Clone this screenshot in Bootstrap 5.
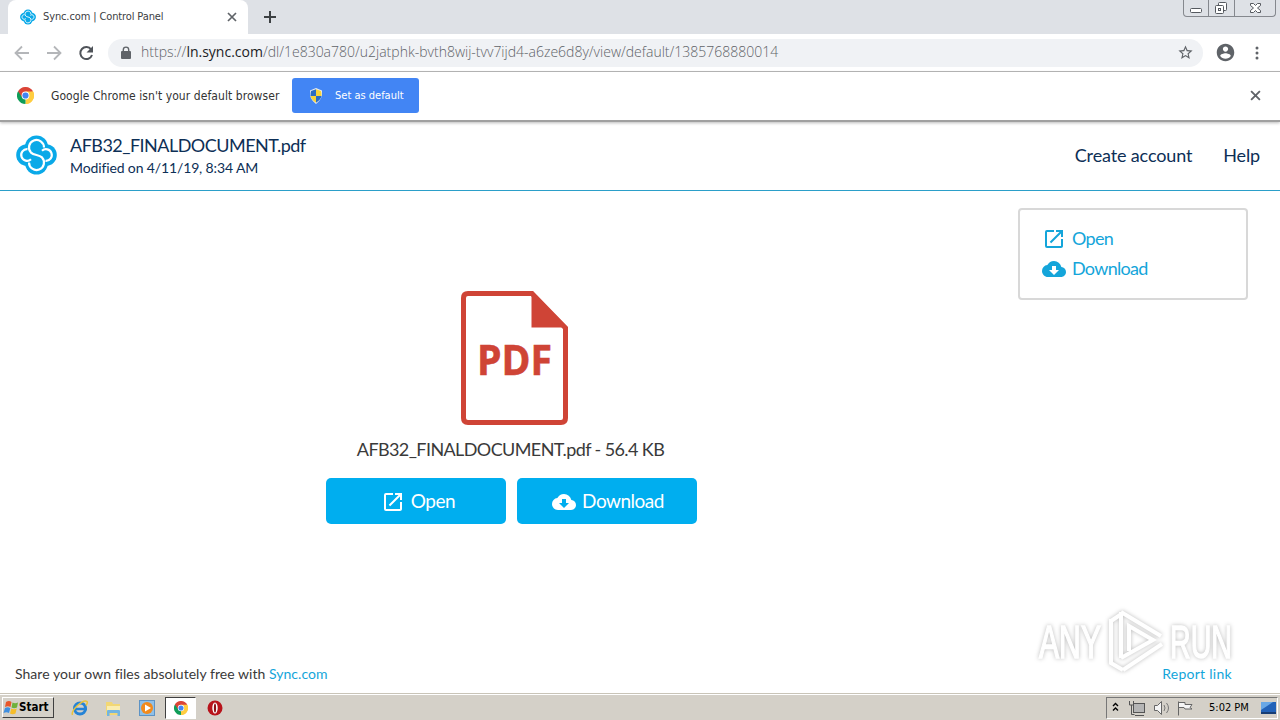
<!DOCTYPE html>
<html lang="en">
<head>
    <meta charset="UTF-8">
    <meta name="viewport" content="width=device-width, initial-scale=1.0">
    <title>Sync.com | Control Panel</title>
    <!-- Bootstrap CSS -->
    <link href="https://cdn.jsdelivr.net/npm/bootstrap@5.3.3/dist/css/bootstrap.min.css" rel="stylesheet">
    <style>
        body { height: 720px; overflow: hidden; font-family: Lato, "Liberation Sans", sans-serif; line-height: 1.2; color: #3a3a3a; }
        a { text-decoration: none; }
        svg { display: block; flex: none; }
        .chrome-ui { font-family: "DejaVu Sans Condensed", "DejaVu Sans", sans-serif; font-stretch: condensed; }

        /* browser window */
        .tab-strip { height: 34px; background: #dee1e6; }
        .browser-tab { width: 240px; height: 34px; margin-left: 8px; padding-left: 12px; border-radius: 8px 8px 0 0; font-size: 11px; color: #3c4043; }
        .tab-title { width: 184px; margin-left: 7px; letter-spacing: -.12px; }
        .window-buttons { width: 93px; height: 17px; margin-right: 4px; border: 1px solid #85888e; border-top: 0; border-radius: 0 0 4px 4px; }
        .window-buttons div + div { border-left: 1px solid #85888e; }
        .toolbar { height: 38px; border-bottom: 1px solid #b0b0b0; }
        .address { width: 1095px; height: 28px; border-radius: 14px; margin-left: 12px; padding: 0 9px 0 10px; background: #f0f2f5; font-family: "Open Sans", sans-serif; font-weight: 300; font-size: 14px; color: #5f6368; }
        .address b { font-weight: 400; color: #202124; }
        .address-text { margin-left: 7px; }
        .profile { margin-left: 12px; }
        .menu-dots { margin-left: 18px; }
        .infobar { height: 50px; border-bottom: 2px solid #a0a0a0; padding: 0 19px 1px 17px; font-size: 12px; color: #333; box-shadow: 0 1px 3px #bbb; }
        .infobar-text { width: 241px; margin-left: 17px; padding-top: 1px; letter-spacing: .07px; }
        .btn-default-browser { width: 127px; height: 35px; background: #4285f4; border-radius: 3px; font-size: 11px; }
        .default-text { margin-left: 11px; padding-top: 1px; }

        /* shared file page */
        .file-header { height: 69px; border-bottom: 1px solid #2b9fc9; padding: 0 20px 2px 16px; color: #0d2f56; }
        .file-info { margin: 1px 0 0 13px; }
        .file-name { font-size: 18px; line-height: 24px; letter-spacing: -.53px; }
        .file-date { font-size: 14px; line-height: 20px; padding-top: 1px; letter-spacing: -.13px; }
        .header-links { gap: 31px; font-size: 18px; letter-spacing: -.14px; padding-top: 2px; }
        .header-links a { color: #0d2f56; }
        .file-page { height: 502px; }
        .preview { width: 1018px; padding: 100px 0 0 5px; }
        .pdf-icon { margin-left: 6px; }
        .preview-name { font-size: 18px; margin: 14px 2px 0 0; letter-spacing: -.6px; }
        .preview-buttons { gap: 11px; margin-top: 17px; }
        .btn-sync { width: 180px; height: 46px; background: #00aeef; border-radius: 5px; font-size: 19px; letter-spacing: -.5px; gap: 6px; padding: 2px 0 0 2px; }
        .btn-sync-open { padding-left: 4px; }
        .action-box { width: 230px; height: 92px; margin-top: 17px; border: 2px solid #d8d8d8; border-radius: 4px; font-size: 18px; letter-spacing: -.7px; padding: 14px 0 0 22px; }
        .action-box a { height: 30px; gap: 6px; }
        .sync-link { color: #14a5da; }
        .page-footer { font-size: 14px; letter-spacing: .04px; padding: 0 48px 10px 15px; }
        .report-link { letter-spacing: .28px; }
        .watermark { left: 1032px; top: 604px; }

        /* taskbar */
        .taskbar { height: 27px; background: #d4d0c8; border-top: 1px solid #c9c4b8; box-shadow: inset 0 1px #fff; padding-top: 1px; }
        .start-button { width: 52px; height: 21px; margin-left: 2px; border: 1px solid; border-color: #fff #404040 #404040 #fff; font-size: 11.5px; color: #000; }
        .quick-icons { margin: 0 2px 0 17px; }
        .running-app { width: 31px; height: 22px; border: 1px solid; border-color: #404040 #fff #fff #404040; background: #fff; }
        .opera { margin-left: 11px; }
        .tray { width: 172px; height: 22px; margin-right: 2px; border: 1px solid; border-color: #777 #fff #fff #777; font-size: 11px; color: #000; padding-left: 5px; }
        .tray-time { margin-left: 11px; }
    </style>
</head>
<body class="d-flex flex-column bg-white">

    <!-- Shared icons -->
    <svg width="0" height="0" class="position-absolute">
        <symbol id="sync-logo" viewBox="0.5 0 41 40">
            <g fill="#0aa9e8">
                <circle cx="21" cy="12" r="11.500"/><circle cx="11.500" cy="20" r="10.800"/>
                <circle cx="30.500" cy="20" r="10.800"/><circle cx="21" cy="28" r="11.500"/>
            </g>
            <g fill="none" stroke="#fff" stroke-width="2.200">
                <path d="M28.500 12.500A7.500 7.500 0 1 0 15.500 17.600C18.500 20.500 23.500 19.500 26.500 22.400A7.500 7.500 0 1 1 13.500 27.500"/>
                <path d="M12 14.200A5.800 5.800 0 1 0 15.500 24.200M30 25.800A5.800 5.800 0 1 0 26.500 15.800"/>
            </g>
        </symbol>
        <symbol id="chrome-logo" viewBox="0 0 48 48">
            <path fill="#db4437" d="M24 24 3.200 12A24 24 0 0 1 44.800 12z"/>
            <path fill="#ffcd40" d="M24 24 44.800 12A24 24 0 0 1 24 48z"/>
            <path fill="#0f9d58" d="M24 24V48A24 24 0 0 1 3.200 12z"/>
            <path fill="#db4437" d="M24 13H45.400L40 7H10L3.200 12 14.500 29.500z"/>
            <path fill="#ffcd40" d="M24 13H45.400A24 24 0 0 1 24 48L33.500 29.500z"/>
            <circle cx="24" cy="24" r="11" fill="#fff"/><circle cx="24" cy="24" r="8.700" fill="#4285f4"/>
        </symbol>
        <symbol id="open-icon" viewBox="0 0 24 24">
            <path fill="currentColor" d="M19 19H5V5h7V3H5a2 2 0 0 0-2 2v14a2 2 0 0 0 2 2h14c1.100 0 2-.9 2-2v-7h-2v7zM14 3v2h3.590l-9.830 9.830 1.410 1.410L19 6.410V10h2V3h-7z"/>
        </symbol>
        <symbol id="download-icon" viewBox="0 0 24 24">
            <path fill="currentColor" d="M19.350 10.040A7.490 7.490 0 0 0 12 4C9.110 4 6.600 5.640 5.350 8.040A5.994 5.994 0 0 0 0 14c0 3.310 2.690 6 6 6h13c2.760 0 5-2.240 5-5 0-2.640-2.050-4.780-4.650-4.960zM17 13l-5 5-5-5h3V9h4v4h3z"/>
        </symbol>
        <symbol id="close-icon" viewBox="0 0 10 10">
            <path d="M1 1 9 9M9 1 1 9" stroke="#5f6368" stroke-width="1.700"/>
        </symbol>
    </svg>

    <!-- Tabs -->
    <div class="tab-strip d-flex chrome-ui">
        <div class="browser-tab bg-white d-flex align-items-center">
            <svg width="16" height="16"><use href="#sync-logo"/></svg>
            <span class="tab-title">Sync.com | Control Panel</span>
            <svg width="10" height="10"><use href="#close-icon"/></svg>
        </div>
        <svg width="12" height="12" class="align-self-center ms-3" viewBox="0 0 12 12"><path d="M6 0V12M0 6H12" stroke="#3c4043" stroke-width="2"/></svg>
        <div class="window-buttons d-flex ms-auto">
            <div><svg width="24" height="16"><rect x="6.500" y="8.500" width="11" height="4" rx="1" fill="#fff" stroke="#55595f"/></svg></div>
            <div><svg width="25" height="16" fill="#fff" stroke="#55595f"><rect x="9.500" y="2.500" width="8" height="8" rx="1"/><rect x="6.500" y="5.500" width="8" height="8" rx="1"/><rect x="9.500" y="8.500" width="2" height="2"/></svg></div>
            <div><svg width="41" height="16"><path d="M15.500 3.500h3l2 2 2-2h3v2l-3 2.500 3 2.500v2h-3l-2-2-2 2h-3v-2l3-2.500-3-2.500z" fill="#fff" stroke="#55595f"/></svg></div>
        </div>
    </div>

    <!-- Address bar -->
    <div class="toolbar d-flex align-items-center">
        <svg width="96" height="36" fill="none" stroke-width="1.800">
            <path d="M29 18H16M22 11.500 15.500 18l6.500 6.500M47 18H60M54 11.500l6.500 6.500L54 24.500" stroke="#b4b6b9"/>
            <path d="M91.200 14.600A6 6 0 1 0 92 20" stroke="#50545a" stroke-width="2"/>
            <path d="M93 11v6.500h-6.500z" fill="#50545a"/>
        </svg>
        <div class="address d-flex align-items-center">
            <svg width="16" height="16" viewBox="0 0 16 16"><rect x="3" y="6" width="10" height="8" rx="1" fill="#5f6368"/><path d="M5.300 7V4.800a2.700 2.700 0 0 1 5.400 0V7" fill="none" stroke="#5f6368" stroke-width="1.400"/></svg>
            <span class="address-text">https://<b>ln.sync.com</b>/dl/1e830a780/u2jatphk-bvth8wij-tvv7ijd4-a6ze6d8y/view/default/1385768880014</span>
            <svg width="17" height="17" class="ms-auto" viewBox="0 0 24 24"><path fill="#5f6368" d="M22 9.240l-7.190-.62L12 2 9.190 8.630 2 9.240l5.460 4.730L5.820 21 12 17.270 18.180 21l-1.630-7.030L22 9.240zM12 15.400l-3.760 2.270 1-4.280-3.320-2.880 4.380-.38L12 6.100l1.710 4.040 4.380.38-3.320 2.880 1 4.280L12 15.400z"/></svg>
        </div>
        <svg width="21" height="21" class="profile" viewBox="2 0 24 24"><path fill="#5f6368" d="M14 2C8.480 2 4 6.480 4 12s4.480 10 10 10 10-4.480 10-10S19.520 2 14 2zm0 3c1.660 0 3 1.340 3 3s-1.340 3-3 3-3-1.340-3-3 1.340-3 3-3zm0 14.200c-2.500 0-4.710-1.280-6-3.220.03-1.990 4-3.080 6-3.080 1.990 0 5.970 1.090 6 3.080-1.290 1.940-3.500 3.220-6 3.220z"/></svg>
        <svg width="6" height="16" class="menu-dots" fill="#5f6368"><circle cx="3" cy="3" r="1.500"/><circle cx="3" cy="8" r="1.500"/><circle cx="3" cy="13" r="1.500"/></svg>
    </div>

    <!-- Default browser prompt -->
    <div class="infobar d-flex align-items-center chrome-ui">
        <svg width="17" height="17"><use href="#chrome-logo"/></svg>
        <span class="infobar-text">Google Chrome isn't your default browser</span>
        <button type="button" class="btn btn-default-browser text-white d-flex align-items-center p-0 ps-3 border-0">
            <svg width="16" height="16" viewBox="0 0 16 16"><path d="M8 0 14 2.500Q15 11 8 16 1 11 2 2.500z" fill="#e8edf2"/><path d="M8 1.200V8H2.500Q2.400 5 3 3z" fill="#2b6cc4"/><path d="M8 1.200 13 3Q13.600 5 13.500 8H8z" fill="#f7d33b"/><path d="M2.500 8H8v6.800Q3.500 12 2.500 8z" fill="#f7d33b"/><path d="M8 8h5.500Q12.500 12 8 14.800z" fill="#2b6cc4"/></svg>
            <span class="default-text">Set as default</span>
        </button>
        <svg width="11" height="11" class="ms-auto"><use href="#close-icon"/></svg>
    </div>

    <!-- File header -->
    <header class="file-header d-flex align-items-center">
        <svg width="41" height="40"><use href="#sync-logo"/></svg>
        <div class="file-info">
            <div class="file-name">AFB32_FINALDOCUMENT.pdf</div>
            <div class="file-date">Modified on 4/11/19, 8:34 AM</div>
        </div>
        <nav class="header-links d-flex ms-auto">
            <a href="#">Create account</a>
            <a href="#">Help</a>
        </nav>
    </header>

    <!-- File preview -->
    <main class="file-page d-flex flex-column">
        <div class="d-flex">
            <section class="preview d-flex flex-column align-items-center">
                <svg width="107" height="134" class="pdf-icon" viewBox="0 0 107 134">
                    <path d="M71 2.500H7Q2.500 2.500 2.500 7V127Q2.500 131.500 7 131.500H100Q104.500 131.500 104.500 127V37z" fill="#fff" stroke="#cf4436" stroke-width="5"/>
                    <path d="M70.500 0 107 36.500H70.500z" fill="#cf4436"/>
                    <text x="16" y="83.500" textLength="75" lengthAdjust="spacingAndGlyphs" font-family="Open Sans" font-weight="700" font-size="42" fill="#cf4436" stroke="#cf4436" stroke-width=".6">PDF</text>
                </svg>
                <div class="preview-name">AFB32_FINALDOCUMENT.pdf - 56.4 KB</div>
                <div class="preview-buttons d-flex">
                    <button type="button" class="btn btn-sync btn-sync-open text-white border-0 d-flex align-items-center justify-content-center"><svg width="24" height="24"><use href="#open-icon"/></svg>Open</button>
                    <button type="button" class="btn btn-sync text-white border-0 d-flex align-items-center justify-content-center"><svg width="24" height="24"><use href="#download-icon"/></svg>Download</button>
                </div>
            </section>
            <aside class="action-box">
                <a href="#" class="sync-link d-flex align-items-center"><svg width="24" height="24"><use href="#open-icon"/></svg>Open</a>
                <a href="#" class="sync-link d-flex align-items-center"><svg width="24" height="24"><use href="#download-icon"/></svg>Download</a>
            </aside>
        </div>
        <footer class="page-footer d-flex justify-content-between mt-auto">
            <span>Share your own files absolutely free with <a href="#" class="sync-link">Sync.com</a></span>
            <a href="#" class="sync-link report-link">Report link</a>
        </footer>
    </main>

    <!-- Taskbar -->
    <div class="taskbar d-flex align-items-center chrome-ui">
        <div class="start-button d-flex align-items-center fw-bold">
            <svg width="16" height="16" viewBox="0 0 16 16"><path d="M3 2Q6 0 8.500 2L7.500 7Q5 5.500 2 7z" fill="#e8562a"/><path d="M9.500 2.500Q12 4 15 2.500L14 7.500Q11 9 8.500 7.500z" fill="#6fb13c"/><path d="M2 8Q5 6.500 7.300 8.200L6 13Q3.500 11.500.5 13z" fill="#3f8fe0"/><path d="M8.300 8.600Q11 10 13.700 8.600L12.500 13.500Q9.500 15 7 13.400z" fill="#f5bd2a"/></svg>
            <span>Start</span>
        </div>
        <svg width="92" height="18" class="quick-icons" viewBox="0 0 92 18">
            <circle cx="9" cy="9.500" r="5.500" fill="none" stroke="#2583d6" stroke-width="3"/><path d="M5 10h11" stroke="#2583d6" stroke-width="2.500"/><path d="M1.500 16Q0 13 6 7 13 .5 16 2.500 17 4 15 6.500" fill="none" stroke="#e9c33b" stroke-width="1.500"/>
            <path d="M35 3h6l1 2h7v11H35z" fill="#f2d774"/><path d="M36 7h13v6H36z" fill="#faedb0"/><path d="M36 17v-5q0-1 1-1h11q1 0 1 1v5h-2.500v-3h-8v3z" fill="#72b4e0"/>
            <rect x="68.500" y="1.500" width="15" height="15" fill="#8fc0e8" stroke="#5d93c5"/><circle cx="76" cy="9" r="6" fill="#f28a1c"/><path d="M74 5.500 80 9 74 12.500z" fill="#fff"/>
        </svg>
        <div class="running-app d-flex align-items-center justify-content-center"><svg width="14" height="14"><use href="#chrome-logo"/></svg></div>
        <svg width="16" height="16" class="opera" viewBox="0 0 16 16"><circle cx="8" cy="8" r="7.500" fill="#b8131b"/><ellipse cx="8" cy="8" rx="2.700" ry="5.500" fill="#fff"/><ellipse cx="8" cy="8" rx="1.100" ry="4.500" fill="#8b0e14"/></svg>
        <div class="tray d-flex align-items-center ms-auto">
            <svg width="86" height="18" viewBox="0 0 86 18" fill="none">
                <path d="M1 7 3.500 4.500 6 7M1 11.500 3.500 9 6 11.500" stroke="#000" stroke-width="1.400"/>
                <rect x="21.500" y="4.500" width="11" height="9" fill="#b5b5b5" stroke="#555"/><path d="M23 16.500h9M17.500 2v4h4V2M19.500 6v9.500h3" stroke="#555"/>
                <path d="M42.500 6.500h3l4-4v13l-4-4h-3z" fill="#f5f5f5" stroke="#666"/><path d="M52 6q2 3 0 6M54.500 4q4 5 0 10" stroke="#777"/>
                <path d="M66.500 2.500v14M67 3.500h6v2h7l-2 3 2 1.500h-7l-1-1.500h-5" fill="#f5f5f5" stroke="#666"/>
            </svg>
            <span class="tray-time">5:02 PM</span>
            <svg width="16" height="14" class="ms-auto" viewBox="0 0 16 14"><rect y="1" width="15" height="10" fill="#2262b8"/><path d="M0 1h12L0 9z" fill="#69a8e6"/><path d="M0 12h15" stroke="#173d74" stroke-width="2"/></svg>
        </div>
    </div>

    <!-- Watermark over the page -->
    <svg class="watermark position-absolute overflow-visible" width="210" height="74" viewBox="0 0 210 74">
        <g style="filter: drop-shadow(0 0 2px #bbb)" fill="#fff" stroke="#fff" font-family="Liberation Sans Narrow, Liberation Sans" font-size="46">
            <text x="7" y="54" textLength="62" lengthAdjust="spacingAndGlyphs" stroke-width="1.500">ANY</text>
            <text x="138" y="54" textLength="62" lengthAdjust="spacingAndGlyphs" stroke-width="1.500">RUN</text>
            <g fill="none" stroke-width="4">
                <path d="M79 15V59L91 66M79 17 88 11M89 8 129 32M89 8V54M91 66 130 40M89 54 121 36 97 22V47"/>
            </g>
        </g>
    </svg>

    <script src="https://cdn.jsdelivr.net/npm/bootstrap@5.3.3/dist/js/bootstrap.bundle.min.js"></script>
</body>
</html>
